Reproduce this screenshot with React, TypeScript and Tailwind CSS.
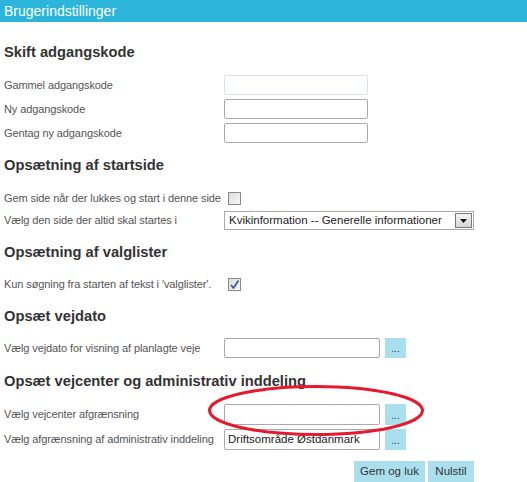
import React from "react";

const font = { fontFamily: '"Liberation Sans", Arial, sans-serif' };

function Heading({ children, className = "" }: { children: React.ReactNode; className?: string }) {
  return (
    <div className={"h-[20px] flex items-center text-[14.7px] font-bold text-[#333333] " + className}>
      {children}
    </div>
  );
}

function Label({ children }: { children: React.ReactNode }) {
  return <div className="w-[220px] shrink-0 text-[11px] tracking-[-0.1px] text-[#555555] whitespace-nowrap">{children}</div>;
}

function TextInput({ w, value = "", light = false, h = "h-[20px]" }: { w: string; value?: string; light?: boolean; h?: string }) {
  return (
    <div
      className={
        w + " " + h +
        " border rounded-[2px] bg-white flex items-center px-[3px] text-[11.5px] text-[#222222] " +
        (light ? "border-[#d9e0e8]" : "border-[#aaaaaa]")
      }
    >
      {value}
    </div>
  );
}

function DotsButton({ h = "h-[20px]" }: { h?: string }) {
  return (
    <div className={"w-[21px] " + h + " ml-[5px] bg-[#aadfee] flex items-end justify-center pb-[4px] text-[10px] leading-none text-[#333333]"}>
      ...
    </div>
  );
}

function Checkbox({ checked = false }: { checked?: boolean }) {
  return (
    <div className="w-[13px] h-[13px] border border-[#8a8a8a] bg-gradient-to-br from-[#dcdcdc] to-[#f7f7f7] relative">
      {checked && (
        <svg viewBox="0 0 11 11" className="absolute inset-0 w-[11px] h-[11px]">
          <path d="M2 6 L4.5 9 L9.5 1.5" fill="none" stroke="#3d57a6" strokeWidth="1.8" strokeLinejoin="round" />
        </svg>
      )}
    </div>
  );
}

export default function App() {
  return (
    <div className="relative w-[527px] h-[482px] bg-white overflow-hidden" style={font}>
      <div className="h-[22px] bg-[#2cb5da] text-white text-[14px] flex items-center pl-[4px]">Brugerindstillinger</div>
      <div className="pl-[4px]">
        <Heading className="mt-[20px]">Skift adgangskode</Heading>

        <div className="mt-[13px] flex flex-col gap-[4px]">
          <div className="flex items-center h-[20px]">
            <Label>Gammel adgangskode</Label>
            <TextInput w="w-[144px]" light />
          </div>
          <div className="flex items-center h-[20px]">
            <Label>Ny adgangskode</Label>
            <TextInput w="w-[144px]" />
          </div>
          <div className="flex items-center h-[20px]">
            <Label>Gentag ny adgangskode</Label>
            <TextInput w="w-[144px]" />
          </div>
        </div>

        <Heading className="mt-[12px]">Opsætning af startside</Heading>
        <div className="mt-[13px] flex items-center h-[20px]">
          <Label>Gem side når der lukkes og start i denne side</Label>
          <div className="ml-[4px]"><Checkbox /></div>
        </div>
        <div className="mt-[3px] flex items-center h-[19px]">
          <Label>Vælg den side der altid skal startes i</Label>
          <div className="w-[250px] h-[19px] border border-[#aaaaaa] bg-white flex items-center justify-between">
            <span className="pl-[4px] text-[11.5px] text-[#222222] whitespace-nowrap">Kvikinformation -- Generelle informationer</span>
            <div className="w-[17px] h-[15px] mr-[1px] border border-[#7a7a7a] bg-gradient-to-b from-[#f4f4f4] to-[#d6d6d6] flex items-center justify-center">
              <svg width="7" height="4" viewBox="0 0 7 4"><path d="M0 0 H7 L3.5 4 Z" fill="#111" /></svg>
            </div>
          </div>
        </div>

        <Heading className="mt-[12px]">Opsætning af valglister</Heading>
        <div className="mt-[12px] flex items-center h-[20px]">
          <Label>Kun søgning fra starten af tekst i 'valglister'.</Label>
          <div className="ml-[4px]"><Checkbox checked /></div>
        </div>

        <Heading className="mt-[12px]">Opsæt vejdato</Heading>
        <div className="mt-[12px] flex items-center h-[20px]">
          <Label>Vælg vejdato for visning af planlagte veje</Label>
          <TextInput w="w-[156px]" />
          <DotsButton />
        </div>

        <Heading className="mt-[13px]">Opsæt vejcenter og administrativ inddeling</Heading>
        <div className="mt-[13px] flex flex-col gap-[4px]">
          <div className="flex items-center h-[21px]">
            <Label>Vælg vejcenter afgrænsning</Label>
            <TextInput w="w-[156px]" h="h-[21px]" />
            <DotsButton h="h-[21px]" />
          </div>
          <div className="flex items-center h-[21px]">
            <Label>Vælg afgrænsning af administrativ inddeling</Label>
            <TextInput w="w-[156px]" h="h-[21px]" value="Driftsområde Østdanmark" />
            <DotsButton h="h-[21px]" />
          </div>
        </div>

        <div className="mt-[11px] flex justify-end gap-[3px] pr-[53px]">
          <div className="w-[71px] h-[21px] bg-[#aadfee] text-[11.5px] text-[#333333] flex items-center justify-center">Gem og luk</div>
          <div className="w-[46px] h-[21px] bg-[#aadfee] text-[11.5px] text-[#333333] flex items-center justify-center">Nulstil</div>
        </div>
      </div>

      <svg className="absolute left-[207px] top-[384px] pointer-events-none" width="218" height="53" viewBox="0 0 218 53">
        <ellipse cx="109" cy="26.5" rx="106.5" ry="24" fill="none" stroke="#e8192c" strokeWidth="3" />
      </svg>
    </div>
  );
}
